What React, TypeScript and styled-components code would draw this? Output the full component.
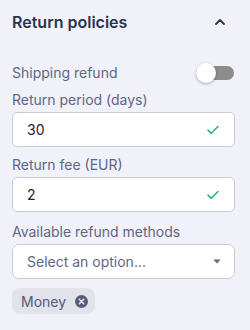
import React, { useState } from "react";
import styled, { createGlobalStyle } from "styled-components";

const Global = createGlobalStyle`
  html, body { margin: 0; padding: 0; background: #f0f1f9; }
  body { font-family: Inter, "Noto Sans", sans-serif; -webkit-font-smoothing: antialiased; }
  * { box-sizing: border-box; }
`;

const Panel = styled.section`
  width: 250px;
  height: 330px;
  background: #f0f1f9;
  padding: 0 15px 0 12px;
  display: flex;
  flex-direction: column;
`;

const Header = styled.div`
  height: 42px;
  display: flex;
  align-items: center;
  justify-content: space-between;
  padding-top: 1px;
`;

const Title = styled.h2`
  margin: 0;
  font-size: 16px;
  font-weight: 600;
  color: #2b3352;
  letter-spacing: 0;
`;

const IconButton = styled.button`
  border: 0;
  background: none;
  padding: 0;
  width: 16px;
  height: 16px;
  margin-right: 7px;
  display: flex;
  align-items: center;
  justify-content: center;
  color: #2b3352;
`;

const Body = styled.div`
  display: flex;
  flex-direction: column;
  padding-top: 20px;
`;

const ToggleRow = styled.div`
  display: flex;
  align-items: center;
  justify-content: space-between;
  height: 22px;
`;

const Label = styled.label`
  display: block;
  font-size: 14px;
  line-height: 20px;
  color: #5f6785;
`;

const Track = styled.button<{ $on: boolean }>`
  position: relative;
  width: 38px;
  height: 14px;
  border: 0;
  padding: 0;
  border-radius: 7px;
  background: ${(p) => (p.$on ? "#2fb37a" : "#8c8c8c")};
  margin-right: 1px;
`;

const Knob = styled.span<{ $on: boolean }>`
  position: absolute;
  top: -3px;
  left: ${(p) => (p.$on ? "18px" : "0px")};
  width: 20px;
  height: 20px;
  border-radius: 50%;
  background: #ffffff;
  box-shadow: 0 1px 3px rgba(0, 0, 0, 0.3);
`;

const Field = styled.div<{ $top?: number }>`
  margin-top: ${(p) => p.$top ?? 8}px;
  display: flex;
  flex-direction: column;
  gap: 2px;
`;

const InputBox = styled.div<{ $radius?: number; $right?: number }>`
  height: 35px;
  background: #ffffff;
  border: 1px solid #c9cad3;
  border-radius: ${(p) => p.$radius ?? 5}px;
  display: flex;
  align-items: center;
  padding: 0 ${(p) => p.$right ?? 15}px 0 14px;
`;

const Value = styled.span`
  flex: 1;
  font-size: 14px;
  color: #1d2232;
`;

const Placeholder = styled.span`
  flex: 1;
  font-size: 14px;
  color: #5f6785;
`;

const Chips = styled.div`
  margin-top: 9px;
  display: flex;
`;

const Chip = styled.span`
  display: inline-flex;
  align-items: center;
  gap: 9px;
  height: 26px;
  padding: 0 7px 0 9px;
  border-radius: 8px;
  background: #e1e2ea;
  font-size: 14px;
  color: #545b78;
`;

const Check = () => (
  <svg width="12" height="10" viewBox="0 0 12 10" fill="none">
    <path d="M1 5.2 L4.3 8.3 L11 1.5" stroke="#2fb37a" strokeWidth="1.6" strokeLinecap="round" strokeLinejoin="round" />
  </svg>
);

const Caret = () => (
  <svg width="8" height="5" viewBox="0 0 8 5">
    <path d="M0.3 0.5 H7.7 L4 4.5 Z" fill="#5f6785" />
  </svg>
);

const ChevronUp = () => (
  <svg width="10" height="6" viewBox="0 0 10 6" fill="none">
    <path d="M1 5 L5 1 L9 5" stroke="#2b3352" strokeWidth="1.8" strokeLinecap="round" strokeLinejoin="round" />
  </svg>
);

const ClearIcon = () => (
  <svg width="13" height="13" viewBox="0 0 13 13">
    <circle cx="6.5" cy="6.5" r="6.5" fill="#575d78" />
    <path d="M4.3 4.3 L8.7 8.7 M8.7 4.3 L4.3 8.7" stroke="#e1e2ea" strokeWidth="1.6" strokeLinecap="round" />
  </svg>
);

export default function App() {
  const [on, setOn] = useState(false);
  return (
    <>
      <Global />
      <Panel>
        <Header>
          <Title>Return policies</Title>
          <IconButton aria-label="Collapse">
            <ChevronUp />
          </IconButton>
        </Header>
        <Body>
          <ToggleRow>
            <Label>Shipping refund</Label>
            <Track $on={on} onClick={() => setOn(!on)} aria-label="Shipping refund">
              <Knob $on={on} />
            </Track>
          </ToggleRow>
          <Field $top={6}>
            <Label>Return period (days)</Label>
            <InputBox>
              <Value>30</Value>
              <Check />
            </InputBox>
          </Field>
          <Field>
            <Label>Return fee (EUR)</Label>
            <InputBox>
              <Value>2</Value>
              <Check />
            </InputBox>
          </Field>
          <Field $top={10}>
            <Label>Available refund methods</Label>
            <InputBox $radius={7} $right={13}>
              <Placeholder>Select an option...</Placeholder>
              <Caret />
            </InputBox>
          </Field>
          <Chips>
            <Chip>
              Money
              <ClearIcon />
            </Chip>
          </Chips>
        </Body>
      </Panel>
    </>
  );
}
